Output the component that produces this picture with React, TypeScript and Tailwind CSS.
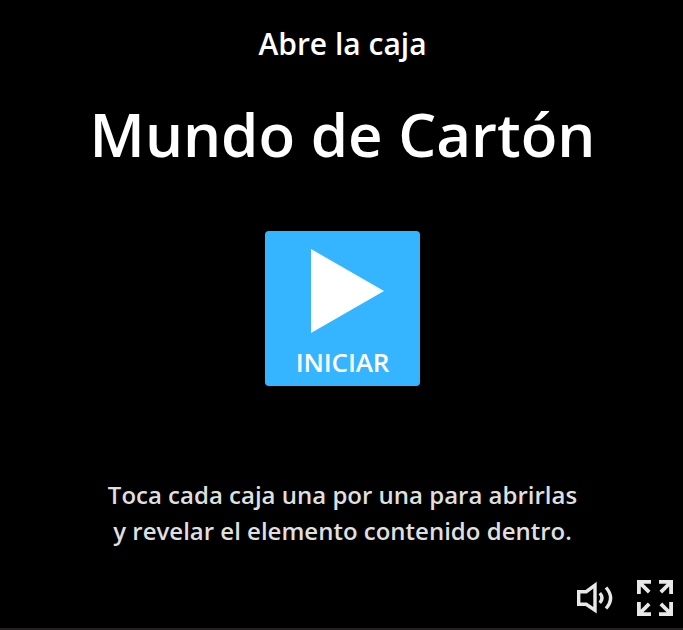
export default function App() {
  return (
    <main className="flex h-[630px] w-[683px] flex-col items-center overflow-hidden border-b-2 border-[#232122] bg-black pl-[2px] font-['Open_Sans',sans-serif] font-semibold text-white">
      <h2 className="mt-[24px] text-[30px] leading-[40px]">Abre la caja</h2>
      <h1 className="mt-[28px] text-[60px] leading-[84px]">Mundo de Cartón</h1>
      <button className="mt-[55px] flex h-[155px] w-[155px] flex-col items-center rounded-[4px] bg-[#35b5ff]">
        <svg className="mt-[18px] ml-[9px] h-[84px] w-[73px]" viewBox="0 0 73 84"><path d="M0 0L73 42L0 84Z" fill="white" /></svg>
        <span className="mt-[11px] text-[26px] leading-[36px] tracking-[-0.15px]">INICIAR</span>
      </button>
      <p className="mt-[91px] text-center text-[24px] leading-[36px] text-[#dfdfdf]">Toca cada caja una por una para abrirlas<br />y revelar el elemento contenido dentro.</p>
      <div className="mt-[31px] mr-[10px] flex gap-[24px] self-end">
        <svg className="h-[36px] w-[36px]" viewBox="0 0 36 36" fill="none" stroke="#e9e7e7" strokeWidth="3.4"><path d="M1.7 11.7H9.2L18 5.2V30.2L9.2 24.3H1.7Z" /><path d="M22.8 13.2Q27.2 18 22.8 22.8M29 7.5Q38.2 18 29 28.5" /></svg>
        <svg className="h-[36px] w-[36px]" viewBox="0 0 36 36" fill="none" stroke="#e9e7e7" strokeWidth="3.8"><path d="M1.9 14V1.9H14M2 2L12.2 12.2M22 1.9H34.1V14M34 2L23.8 12.2M1.9 22V34.1H14M2 34L12.2 23.8M22 34.1H34.1V22M34 34L23.8 23.8" /></svg>
      </div>
    </main>
  );
}
